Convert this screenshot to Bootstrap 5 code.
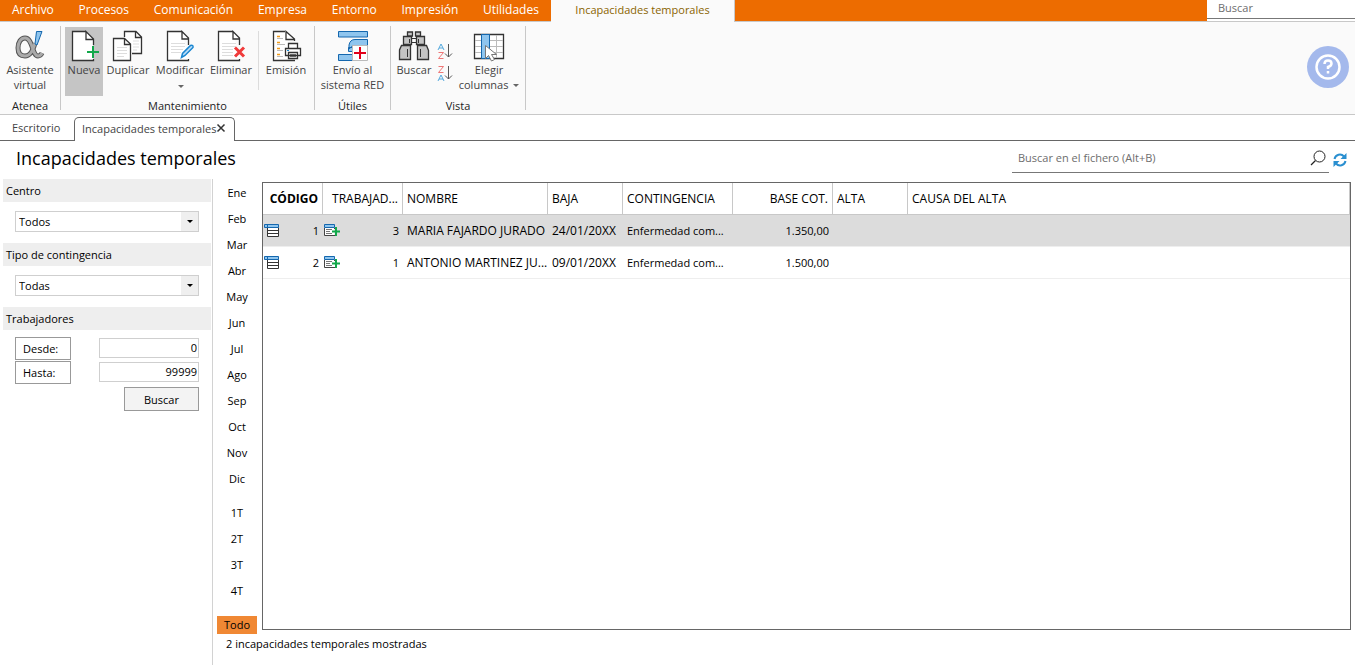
<!DOCTYPE html>
<html lang="es">
<head>
<meta charset="utf-8">
<meta name="viewport" content="width=device-width, initial-scale=1">
<title>Incapacidades temporales</title>
<link href="https://cdn.jsdelivr.net/npm/bootstrap@5.3.0/dist/css/bootstrap.min.css" rel="stylesheet">
<style>
  body { font-family: "Open Sans", "Noto Sans", sans-serif; font-size: 11px; line-height: 15px; color: #000; background: #fff; }
  button, input, select { font: inherit; color: inherit; }
  button { background: none; border: 0; padding: 0; }
  a { color: inherit; text-decoration: none; }
  svg { display: block; flex: none; }

  .topbar { background: #ed6c00; height: 22px; border-bottom: 1px solid #c8c8c8; font-size: 12px; }
  .topbar a { color: #fff; line-height: 20px; padding: 0 12px; }
  .topbar a.current { background: #fafafa; color: #8a6400; border-right: 1px solid #c8c8c8; padding: 0; margin-bottom: -1px; width: 184px; text-align: center; white-space: nowrap; font-size: 11px; }
  .topbar .menu-items { width: 551px; }
  .global-find { width: 148px; background: #fff; padding-bottom: 2px; }
  .global-find input { display: block; width: 100%; height: 19px; border: 0; border-bottom: 1px solid #777; padding: 0 11px 4px; font-size: 11px; outline: 0; }
  input::placeholder { color: #6d6d6d; opacity: 1; }

  .ribbon { background: #fafafa; border-bottom: 1px solid #c8c8c8; height: 93px; color: #444; }
  .ribbon-group { border-right: 1px solid #c8c8c8; margin: 4px 0; padding: 1px 4px 0; }
  .ribbon-group .caption { color: #222; line-height: 20px; text-align: center; }
  .tool { height: 69px; padding-top: 3px; display: flex; flex-direction: column; align-items: center; white-space: nowrap; }
  .tool.pressed { background: #c5c5c5; }
  .w-38 { width: 38px; } .w-48 { width: 48px; } .w-50px { width: 50px; } .w-54 { width: 54px; } .w-68 { width: 68px; }
  .caret { display: inline-block; border: 3px solid transparent; border-top-color: #666; border-bottom: 0; vertical-align: 2px; margin-left: 2px; }
  .tool-rule { width: 1px; background: #dcdcdc; margin: 4px 3px 6px; }
  .help { width: 42px; height: 42px; border-radius: 50%; background: #a4b9ec; margin: 0 6px 2px 0; }

  .doc-tabs { height: 26px; border-bottom: 1px solid #666; color: #444; padding-top: 2px; }
  .doc-tabs > a { line-height: 22px; padding: 0 12px; width: 74px; }
  .doc-tab { height: 24px; border: 1px solid #666; border-bottom: 0; border-radius: 5px 5px 0 0; background: #fff; padding: 0 8px 3px 7px; width: 161px; white-space: nowrap; }

  .page-head { height: 38px; padding: 0 8px 0 16px; }
  .page-head h1 { font-size: 18px; line-height: 34px; font-weight: 400; margin: 0; }
  .file-find { width: 317px; height: 32px; border-bottom: 1px solid #777; padding: 2px 3px 0 6px; }
  .file-find input { border: 0; outline: 0; padding: 0; background: none; }

  .filters { width: 213px; border-right: 1px solid #d2d2d2; padding: 0 1px 0 3px; }
  .filters h2 { background: #eee; font-size: 11px; line-height: 23px; font-weight: 400; margin: 0; padding-left: 3px; }
  .filters .field { padding: 9px 12px 11px; }
  .filters select { width: 100%; height: 21px; border: 1px solid #cfcfcf; border-radius: 0; padding: 0 20px 0 3px; appearance: none;
    background: url("data:image/svg+xml,%3Csvg xmlns='http://www.w3.org/2000/svg' width='17' height='19'%3E%3Cpath fill='%23efefef' d='M0 0h17v19H0z'/%3E%3Cpath d='M6 8h6l-3 3z'/%3E%3C/svg%3E") right center no-repeat #fff; }
  .ranges { padding: 6px 12px 0; }
  .range-row { height: 24px; }
  .range-row button { width: 56px; height: 23px; border: 1px solid #999; background: #fff; padding-left: 7px; text-align: left; }
  .range-row input { width: 100px; height: 20px; border: 1px solid #cfcfcf; padding: 0 1px 1px; text-align: right; }
  .search-btn { width: 75px; height: 24px; border: 1px solid #999; background: #f3f3f3; margin-top: 3px; }

  .periods { width: 49px; padding: 5px 5px 0 4px; gap: 8px; }
  .periods button { height: 18px; line-height: 18px; flex: none; }
  .periods .active { background: #f08834; }

  .grid-box { border: 1px solid #666; height: calc(100vh - 217px); min-height: 240px; margin: 3px 4px 0 0; overflow: hidden; }
  .grid-box table { table-layout: fixed; width: 100%; border-collapse: separate; border-spacing: 0; }
  .grid-box th { height: 32px; font-weight: 400; font-size: 12px; border-right: 1px solid #c8c8c8; border-bottom: 1px solid #c8c8c8; }
  .grid-box td { height: 32px; border-bottom: 1px solid #eee; }
  .grid-box th, .grid-box td { padding: 0 0 0 4px; white-space: nowrap; overflow: hidden; }
  .grid-box .num { text-align: right; padding-right: 4px; }
  .grid-box .with-icon { padding: 0 4px 0 1px; }
  .grid-box .wide-text { font-size: 12px; }
  .grid-box tr.selected td { background: #dcdcdc; }
  .status { line-height: 20px; padding-left: 13px; }
</style>
</head>
<body class="d-flex flex-column min-vh-100">

<svg width="0" height="0" class="position-absolute" aria-hidden="true">
  <symbol id="i-sheet" viewBox="0 0 16 16"><path d="M3.500 4.500V13.500H14.500V4.500" fill="#fff" stroke="#333"/><path d="M4 7.500h11M4 10.500h11" stroke="#333"/><path d="M.5 1.500h14v3H.5z" fill="#8fc5ee" stroke="#1467ae"/><path d="M3.500 2v3" stroke="#1467ae"/></symbol>
  <symbol id="i-sheetplus" viewBox="0 0 17 16"><path d="M.5 4.500h10v8H.5z" fill="#fff"/><path d="M11 12.500H.5V5M10.500 5v1" fill="none" stroke="#444"/><path d="M.5 1.500h10v3H.5z" fill="#8fc5ee" stroke="#1467ae"/><path d="M2 6.500h6M2 8.500h4M2 10.500h6" stroke="#777"/><path d="M12 4v9M8 8.500h8" stroke="#12a84b" stroke-width="2"/></symbol>
</svg>

<header>
  <nav class="topbar d-flex" aria-label="Menú principal">
    <div class="menu-items d-flex justify-content-between">
      <a href="#">Archivo</a><a href="#">Procesos</a><a href="#">Comunicación</a><a href="#">Empresa</a><a href="#">Entorno</a><a href="#">Impresión</a><a href="#">Utilidades</a>
    </div>
    <a href="#" class="current" aria-current="page">Incapacidades temporales</a>
    <div class="global-find ms-auto"><input type="text" placeholder="Buscar" aria-label="Buscar"></div>
  </nav>

  <div class="ribbon d-flex">
    <section class="ribbon-group">
      <button class="tool" style="width:52px">
        <svg width="32" height="32" viewBox="0 0 32 32"><g fill="none" stroke-linejoin="round"><path d="M21 13c-2 8-5 13-10 13-5 0-7-3-7-8 0-6 3-10 7-10 8 0 7 18 13 18 2 0 3-1 4-3" stroke="#555" stroke-width="5"/><path d="M21 13c-2 8-5 13-10 13-5 0-7-3-7-8 0-6 3-10 7-10 8 0 7 18 13 18 2 0 3-1 4-3" stroke="#aaa" stroke-width="3"/></g><path d="M22.500 1.500h5.500L23 15l-2-1z" fill="#8fc5ee" stroke="#1467ae"/></svg>
        <span>Asistente<br>virtual</span>
      </button>
      <div class="caption">Atenea</div>
    </section>

    <section class="ribbon-group">
      <div class="d-flex">
        <button class="tool pressed w-38">
          <svg width="32" height="32" viewBox="0 0 32 32"><path d="M5 1h13l7 7v22H5z" fill="#fff"/><path d="M18 1.500H4.500v29h21V29M25.500 15V9L18 1.500V9.500h7.500" fill="#fff" stroke="#333" stroke-width="1.300"/><path d="M25 16v12M19 22h12" stroke="#12a84b" stroke-width="2"/></svg>
          <span>Nueva</span>
        </button>
        <button class="tool w-50px">
          <svg width="32" height="32" viewBox="0 0 32 32"><path d="M12.500 7V1.500H24L29.500 7v16.500H20M23.500 2v5.500h6" fill="#fff" stroke="#333" stroke-width="1.300"/><path d="M21 11h6M21 14h6M21 17h6M21 20h4" stroke="#ddd"/><path d="M1.500 8.500h11L18.500 14v16.500h-17zM12.500 9v5.500h6" fill="#fff" stroke="#333" stroke-width="1.300"/><path d="M5 17.500h10M5 20.500h10M5 23.500h10M5 26.500h7" stroke="#ddd"/></svg>
          <span>Duplicar</span>
        </button>
        <button class="tool w-54">
          <svg width="32" height="32" viewBox="0 0 32 32"><path d="M18 1.500H3.500v29h21V29M24.500 15V8L18 1.500V9h7" fill="#fff" stroke="#333" stroke-width="1.300"/><path d="M7 13.500h14M7 16.500h14M7 19.500h12M7 22.500h10" stroke="#ddd"/><path d="M17.500 27.500l1-4 8-8q3-1 2.500 2l-8 8z" fill="#b9dcf7" stroke="#1a86d0" stroke-width="1.500"/></svg>
          <span>Modificar</span><span class="caret mt-2"></span>
        </button>
        <button class="tool w-48">
          <svg width="32" height="32" viewBox="0 0 32 32"><path d="M18 1.500H3.500v29h21V29M24.500 15V8L18 1.500V9h7" fill="#fff" stroke="#333" stroke-width="1.300"/><path d="M7 13.500h14M7 16.500h14M7 19.500h11M7 22.500h11M7 25.500h11" stroke="#ddd"/><path d="M20 17.500l9 9M29 17.500l-9 9" stroke="#f03a3a" stroke-width="3"/></svg>
          <span>Eliminar</span>
        </button>
        <div class="tool-rule"></div>
        <button class="tool w-48">
          <svg width="32" height="32" viewBox="0 0 32 32"><path d="M15 1.500H3.500v29H25M24.500 11V9L16 1.500V9.500h8.500" fill="#fff" stroke="#333" stroke-width="1.300"/><path d="M7 6.500h3M7 12.500h3M7 18.500h3M7 24.500h3" stroke="#f09a1a" stroke-width="1.500"/><path d="M7 8.500h6M7 14.500h8M7 20.500h6M7 26.500h6" stroke="#bbb"/><path d="M15.500 18.500h15v7h-15zM18.500 13.500h9v5h-9zM18.500 22.500h9v6h-9z" fill="#fff" stroke="#333" stroke-width="1.300"/><path d="M20 24.500h6M20 26.500h6" stroke="#666"/><path d="M17 20.500h2" stroke="#1a86d0"/></svg>
          <span>Emisión</span>
        </button>
      </div>
      <div class="caption">Mantenimiento</div>
    </section>

    <section class="ribbon-group px-1">
      <button class="tool" style="width:67px">
        <svg width="32" height="32" viewBox="0 0 32 32"><path d="M1.500 1.500h29v5.500h-29zM30.500 9.500v6H16l-4 3.500v-4q1-5.500 6-5.500zM11.500 17.500h5v4h-5zM1.500 24.500h14v6h-14z" fill="#8fc5ee" stroke="#1467ae"/><path d="M15.500 15.500h15v15h-15z" fill="#fff" stroke="#bbb"/><path d="M23 17v12M17 23h12" stroke="#e2001a" stroke-width="2"/></svg>
        <span>Envío al<br>sistema RED</span>
      </button>
      <div class="caption">Útiles</div>
    </section>

    <section class="ribbon-group">
      <div class="d-flex">
        <button class="tool w-38">
          <svg width="32" height="32" viewBox="0 0 32 32"><g fill="#c4c4c4" stroke="#333" stroke-width="1.300"><path d="M9.500 2h5v4h-5zM17.500 2h5v4h-5zM5.500 6.500h8v8h-8zM18.500 6.500h8v8h-8zM3.500 15.500h9v14h-11V20zM19.500 15.500h9l2 5v9h-11z"/></g><path d="M14 8.500h4M14 12.500h4M11.500 9v4M20.500 9v4M9.500 19v8M22.500 19v8" stroke="#333"/></svg>
          <span>Buscar</span>
        </button>
        <div class="d-flex flex-column align-items-center gap-1 pt-3" style="width:24px">
          <button aria-label="Orden ascendente"><svg width="16" height="18" viewBox="0 0 16 18"><path d="M1 7l3-6 3 6M2 5h4" fill="none" stroke="#55a9dd"/><path d="M1.500 9.500h5l-5 6h5" fill="none" stroke="#ee7777"/><path d="M11.500 1v13M8 10.500l3.500 3.500 3.500-3.500" fill="none" stroke="#555"/></svg></button>
          <button aria-label="Orden descendente"><svg width="16" height="18" viewBox="0 0 16 18"><path d="M1.500 1.500h5l-5 6h5" fill="none" stroke="#ee7777"/><path d="M1 16l3-6 3 6M2 14h4" fill="none" stroke="#55a9dd"/><path d="M11.500 1v13M8 10.500l3.500 3.500 3.500-3.500" fill="none" stroke="#555"/></svg></button>
        </div>
        <button class="tool" style="width:64px">
          <svg width="32" height="32" viewBox="0 0 32 32"><path d="M1.500 4.500h29v24h-29z" fill="#fff" stroke="#333" stroke-width="1.300"/><path d="M2 10.500h28M2 16.500h28M2 22.500h28M23.500 5v23" stroke="#bbb"/><path d="M8.500 4.500h8v24h-8z" fill="#8fc5ee" stroke="#1467ae"/><path d="M12.500 15.500v13l3-3 3 5.500 3-1.500-3-5h5z" fill="#fff" stroke="#777"/></svg>
          <span>Elegir<br>columnas <i class="caret"></i></span>
        </button>
      </div>
      <div class="caption">Vista</div>
    </section>

    <button class="help ms-auto align-self-center d-flex align-items-center justify-content-center" aria-label="Ayuda">
      <svg width="28" height="28" viewBox="0 0 28 28" fill="none" stroke="#fff" stroke-width="2.500"><circle cx="14" cy="14" r="11.500"/><path d="M10.500 11q0-3.500 3.500-3.500t3.500 3q0 2.500-3.500 3.500v2M14 18v2.500"/></svg>
    </button>
  </div>

  <div class="doc-tabs d-flex">
    <a href="#">Escritorio</a>
    <div class="doc-tab d-flex align-items-center justify-content-between">
      <a href="#">Incapacidades temporales</a>
      <button aria-label="Cerrar pestaña"><svg width="10" height="10" viewBox="0 0 10 10"><path d="M1.500 1.500l7 7M8.500 1.500l-7 7" stroke="#333" stroke-width="1.500"/></svg></button>
    </div>
  </div>
</header>

<div class="page-head d-flex justify-content-between">
  <h1>Incapacidades temporales</h1>
  <div class="d-flex align-items-start">
    <div class="file-find d-flex align-items-center">
      <input type="text" class="flex-grow-1" placeholder="Buscar en el fichero (Alt+B)" aria-label="Buscar en el fichero">
      <button aria-label="Buscar en el fichero"><svg width="16" height="16" viewBox="0 0 16 16" fill="none" stroke="#222"><circle cx="9.500" cy="6.500" r="5.500"/><path d="M5.500 10.500L1 15" stroke-width="1.300"/></svg></button>
    </div>
    <button class="ms-1 mt-2 pt-1" aria-label="Actualizar"><svg width="14" height="14" viewBox="0 0 14 14"><path d="M1.500 6A5.500 5.500 0 0 1 11 3.500M12.500 8A5.500 5.500 0 0 1 3 10.500" fill="none" stroke="#2a8fd0" stroke-width="2"/><path d="M13.500 0v6h-6zM.5 14V8h6z" fill="#2a8fd0"/></svg></button>
  </div>
</div>

<div class="d-flex flex-grow-1">
  <aside class="filters flex-shrink-0">
    <h2><label for="centro">Centro</label></h2>
    <div class="field"><select id="centro"><option>Todos</option></select></div>
    <h2><label for="tipo">Tipo de contingencia</label></h2>
    <div class="field"><select id="tipo"><option>Todas</option></select></div>
    <h2>Trabajadores</h2>
    <div class="ranges">
      <div class="range-row d-flex justify-content-between align-items-center"><button>Desde:</button><input type="text" value="0" aria-label="Desde"></div>
      <div class="range-row d-flex justify-content-between align-items-center"><button>Hasta:</button><input type="text" value="99999" aria-label="Hasta"></div>
      <div class="text-end"><button class="search-btn">Buscar</button></div>
    </div>
  </aside>

  <div class="flex-grow-1 overflow-hidden">
    <div class="d-flex">
      <div class="periods d-flex flex-column flex-shrink-0">
        <button>Ene</button><button>Feb</button><button>Mar</button><button>Abr</button><button>May</button><button>Jun</button><button>Jul</button><button>Ago</button><button>Sep</button><button>Oct</button><button>Nov</button><button>Dic</button>
        <button class="mt-2">1T</button><button>2T</button><button>3T</button><button>4T</button>
        <button class="mt-2 active">Todo</button>
      </div>
      <div class="grid-box flex-grow-1">
        <table>
          <colgroup><col style="width:60px"><col style="width:80px"><col style="width:145px"><col style="width:75px"><col style="width:110px"><col style="width:100px"><col style="width:75px"><col></colgroup>
          <thead>
            <tr><th class="num fw-bold">CÓDIGO</th><th class="num">TRABAJAD...</th><th>NOMBRE</th><th>BAJA</th><th>CONTINGENCIA</th><th class="num">BASE COT.</th><th>ALTA</th><th>CAUSA DEL ALTA</th></tr>
          </thead>
          <tbody>
            <tr class="selected">
              <td class="with-icon"><div class="d-flex justify-content-between"><svg width="16" height="16"><use href="#i-sheet"/></svg>1</div></td>
              <td class="with-icon"><div class="d-flex justify-content-between"><svg width="17" height="16"><use href="#i-sheetplus"/></svg>3</div></td>
              <td class="wide-text">MARIA FAJARDO JURADO</td><td class="wide-text">24/01/20XX</td><td>Enfermedad com...</td><td class="num">1.350,00</td><td></td><td></td>
            </tr>
            <tr>
              <td class="with-icon"><div class="d-flex justify-content-between"><svg width="16" height="16"><use href="#i-sheet"/></svg>2</div></td>
              <td class="with-icon"><div class="d-flex justify-content-between"><svg width="17" height="16"><use href="#i-sheetplus"/></svg>1</div></td>
              <td class="wide-text">ANTONIO MARTINEZ JU...</td><td class="wide-text">09/01/20XX</td><td>Enfermedad com...</td><td class="num">1.500,00</td><td></td><td></td>
            </tr>
          </tbody>
        </table>
      </div>
    </div>
    <div class="status">2 incapacidades temporales mostradas</div>
  </div>
</div>

<script src="https://cdn.jsdelivr.net/npm/bootstrap@5.3.0/dist/js/bootstrap.bundle.min.js"></script>
</body>
</html>
